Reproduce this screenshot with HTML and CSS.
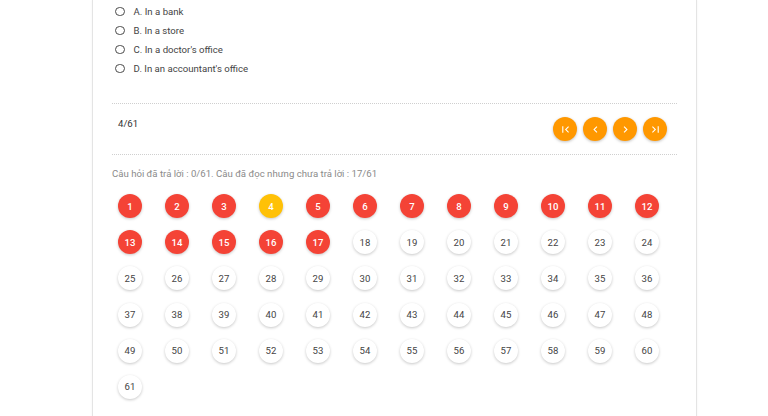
FILE: index.html
```html
<!DOCTYPE html>
<html>
<head>
<meta charset="utf-8">
<link rel="stylesheet" href="styles.css">
</head>
<body>
<div class="card">
  <ul class="options">
    <li><span class="radio"></span><span>A. In a bank</span></li>
    <li><span class="radio"></span><span>B. In a store</span></li>
    <li><span class="radio"></span><span>C. In a doctor's office</span></li>
    <li><span class="radio"></span><span>D. In an accountant's office</span></li>
  </ul>
  <div class="pager">
    <span class="count">4/61</span>
    <div class="btns">
      <span class="btn"><svg viewBox="0 0 24 24"><path d="M18.41 16.59L13.82 12l4.59-4.59L17 6l-6 6 6 6zM6 6h2v12H6z"/></svg></span>
      <span class="btn"><svg viewBox="0 0 24 24"><path d="M15.41 7.41L14 6l-6 6 6 6 1.41-1.41L10.83 12z"/></svg></span>
      <span class="btn"><svg viewBox="0 0 24 24"><path d="M10 6L8.59 7.41 13.17 12l-4.58 4.59L10 18l6-6z"/></svg></span>
      <span class="btn"><svg viewBox="0 0 24 24"><path d="M5.59 7.41L10.18 12l-4.59 4.59L7 18l6-6-6-6zM16 6h2v12h-2z"/></svg></span>
    </div>
  </div>
  <p class="status">Câu hỏi đã trả lời : 0/61. Câu đã đọc nhưng chưa trả lời : 17/61</p>
  <div class="grid">
    <span class="q red">1</span><span class="q red">2</span><span class="q red">3</span><span class="q yellow">4</span><span class="q red">5</span><span class="q red">6</span><span class="q red">7</span><span class="q red">8</span><span class="q red">9</span><span class="q red">10</span><span class="q red">11</span><span class="q red">12</span>
    <span class="q red">13</span><span class="q red">14</span><span class="q red">15</span><span class="q red">16</span><span class="q red">17</span><span class="q">18</span><span class="q">19</span><span class="q">20</span><span class="q">21</span><span class="q">22</span><span class="q">23</span><span class="q">24</span>
    <span class="q">25</span><span class="q">26</span><span class="q">27</span><span class="q">28</span><span class="q">29</span><span class="q">30</span><span class="q">31</span><span class="q">32</span><span class="q">33</span><span class="q">34</span><span class="q">35</span><span class="q">36</span>
    <span class="q">37</span><span class="q">38</span><span class="q">39</span><span class="q">40</span><span class="q">41</span><span class="q">42</span><span class="q">43</span><span class="q">44</span><span class="q">45</span><span class="q">46</span><span class="q">47</span><span class="q">48</span>
    <span class="q">49</span><span class="q">50</span><span class="q">51</span><span class="q">52</span><span class="q">53</span><span class="q">54</span><span class="q">55</span><span class="q">56</span><span class="q">57</span><span class="q">58</span><span class="q">59</span><span class="q">60</span>
    <span class="q">61</span>
  </div>
</div>
</body>
</html>
```
FILE: styles.css
```css
html, body {
  margin: 0;
  padding: 0;
  background: #fff;
  font-family: Roboto, "Noto Sans", Arial, sans-serif;
  color: #333;
}
body {
  height: 416px;
  overflow: hidden;
}
.card {
  margin-left: 92px;
  width: 605px;
  min-height: 430px;
  border-left: 1px solid #e4e4e4;
  border-right: 1px solid #e4e4e4;
  box-shadow: 0 0 2px rgba(0,0,0,0.06);
  padding: 0 19px;
  box-sizing: border-box;
}
.options {
  list-style: none;
  margin: 0;
  padding: 2px 0 0 0;
  height: 103px;
  box-sizing: border-box;
}
.options li {
  display: flex;
  align-items: center;
  height: 19px;
  font-size: 9.6px;
  color: #444;
}
.radio {
  width: 7.6px;
  height: 7.6px;
  border: 1.8px solid #4a4a4a;
  border-radius: 50%;
  margin-left: 3px;
  margin-right: 9px;
}
.pager {
  border-top: 1px dotted #cfcfcf;
  border-bottom: 1px dotted #cfcfcf;
  display: flex;
  justify-content: space-between;
  align-items: flex-start;
  padding: 13px 10px 13px 6px;
  height: 24px;
}
.count {
  font-size: 9.6px;
  line-height: 14px;
  color: #333;
}
.btns {
  display: flex;
  gap: 6px;
}
.btn {
  width: 24px;
  height: 24px;
  border-radius: 50%;
  background: #ff9800;
  box-shadow: 0 1px 3px rgba(0,0,0,0.25);
  display: flex;
  align-items: center;
  justify-content: center;
}
.btn svg {
  width: 13px;
  height: 13px;
  fill: #fff;
}
.status {
  margin: 12px 0 0 0;
  font-size: 9.6px;
  line-height: 14px;
  color: #8a8a8a;
}
.grid {
  display: grid;
  grid-template-columns: repeat(12, 47px);
  row-gap: 12.2px;
  margin-top: 13px;
}
.q {
  width: 24px;
  height: 24px;
  margin-left: 6px;
  border-radius: 50%;
  background: #fff;
  box-shadow: 0 1px 3px rgba(0,0,0,0.22);
  display: flex;
  align-items: center;
  justify-content: center;
  font-size: 9.6px;
  color: #444;
}
.q.red {
  background: #f44336;
  color: #fff;
  font-weight: 500;
}
.q.yellow {
  background: #ffc107;
  color: #fff;
  font-weight: 500;
}
```
